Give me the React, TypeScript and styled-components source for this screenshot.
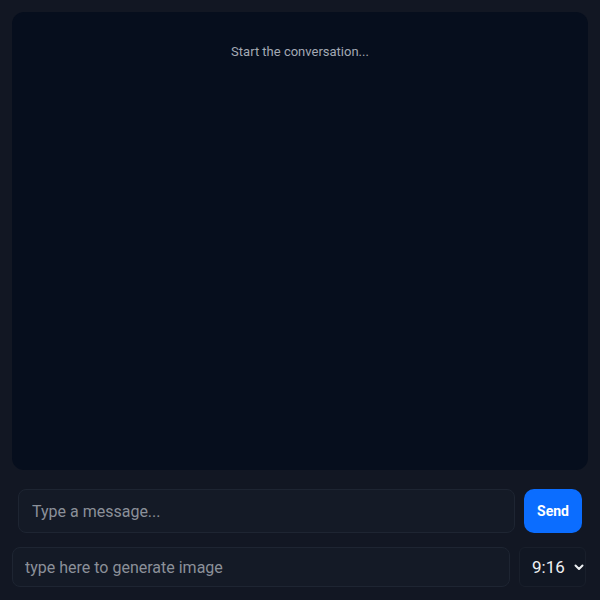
import React from "react";
import styled, { createGlobalStyle } from "styled-components";

const Global = createGlobalStyle`
  html, body { margin: 0; padding: 0; background: #121723; }
  body { font-family: Roboto, "Noto Sans", sans-serif; }
  * { box-sizing: border-box; }
`;

const Page = styled.div`
  width: 600px;
  height: 600px;
  padding: 12px;
  display: flex;
  flex-direction: column;
  background: #121723;
`;

const ChatPanel = styled.div`
  height: 458px;
  border-radius: 12px;
  background: #060e1d;
  display: flex;
  justify-content: center;
  padding-top: 32px;
`;

const Hint = styled.div`
  font-size: 13px;
  color: #a3a9b4;
  line-height: 16px;
`;

const MessageRow = styled.form`
  display: flex;
  gap: 9px;
  padding: 0 6px;
  margin-top: 19px;
  height: 44px;
`;

const TextInput = styled.input`
  flex: 1;
  min-width: 0;
  height: 100%;
  border-radius: 8px;
  border: 1px solid #1e2532;
  background: #141a26;
  color: #e5e7eb;
  font-family: Roboto, sans-serif;
  font-size: 16px;
  padding: 0 13px;
  outline: none;
  &::placeholder { color: #8b9099; }
`;

const SendButton = styled.button`
  width: 58px;
  height: 100%;
  border: none;
  border-radius: 10px;
  background: #0b6dff;
  color: #fff;
  font-family: Roboto, sans-serif;
  font-weight: 700;
  font-size: 14px;
  cursor: pointer;
`;

const ImageRow = styled.div`
  display: flex;
  gap: 9px;
  margin-top: 14px;
  height: 40px;
  padding-right: 2px;
`;

const ImageInput = styled(TextInput)`
  padding: 0 12px;
`;

const SelectWrap = styled.div`
  position: relative;
  width: 67px;
  height: 100%;
`;

const Select = styled.select`
  appearance: none;
  width: 100%;
  height: 100%;
  border: 1px solid #191f2b;
  border-radius: 6px;
  background: #111723;
  color: #eef0f3;
  font-family: Roboto, sans-serif;
  font-size: 17px;
  padding: 0 0 0 12px;
  outline: none;
`;

const Chevron = styled.svg`
  position: absolute;
  right: 2px;
  top: 50%;
  transform: translateY(-50%);
  pointer-events: none;
`;

export default function App() {
  return (
    <>
      <Global />
      <Page>
        <ChatPanel>
          <Hint>Start the conversation...</Hint>
        </ChatPanel>
        <MessageRow onSubmit={(e) => e.preventDefault()}>
          <TextInput placeholder="Type a message..." />
          <SendButton type="submit">Send</SendButton>
        </MessageRow>
        <ImageRow>
          <ImageInput placeholder="type here to generate image" />
          <SelectWrap>
            <Select defaultValue="9:16">
              <option value="9:16">9:16</option>
              <option value="16:9">16:9</option>
              <option value="1:1">1:1</option>
            </Select>
            <Chevron width="10" height="10" viewBox="0 0 10 10">
              <path d="M1.5 3.5 L5 7 L8.5 3.5" fill="none" stroke="#eef0f3" strokeWidth="2" strokeLinecap="round" strokeLinejoin="round" />
            </Chevron>
          </SelectWrap>
        </ImageRow>
      </Page>
    </>
  );
}
